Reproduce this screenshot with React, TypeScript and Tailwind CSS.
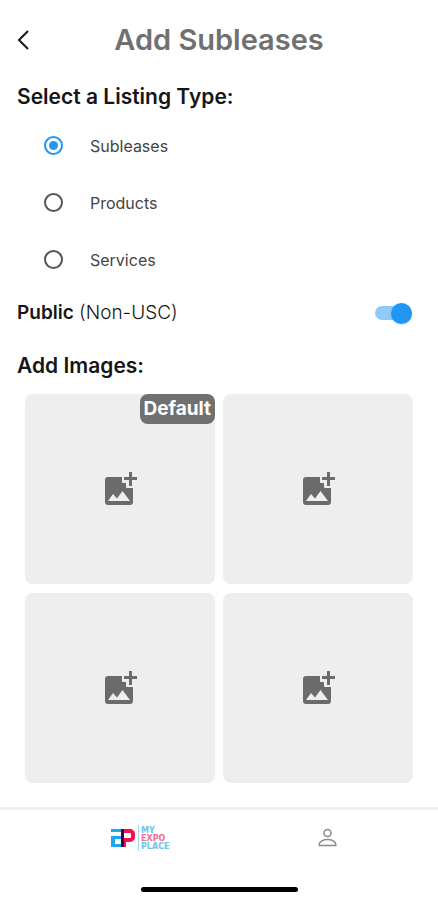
import { useState } from 'react';

const LISTING_TYPES = ['Subleases', 'Products', 'Services'];
const IMAGE_SLOTS = [0, 1, 2, 3];

function AddImageIcon() {
  return (
    <svg viewBox="0 0 34 34" className="h-[34px] w-[34px] fill-[#6b6b6b]" aria-hidden="true">
      <path d="M5 5h14v5a1 1 0 0 0 1 1h3v4a1 1 0 0 0 1 1h6v14a3 3 0 0 1-3 3H5a3 3 0 0 1-3-3V8a3 3 0 0 1 3-3Z" />
      <path d="M26 0h3v5h5v3h-5v6h-3V8h-5V5h5Z" />
      <path d="M5 29 10 22l4 4.500L19.500 19 27 29Z" className="fill-[#eeeeee]" />
    </svg>
  );
}

function Logo() {
  return (
    <svg viewBox="0 0 66 28" className="h-7 w-[66px]" role="img" aria-label="My Expo Place">
      <g fill="#1ea7ee">
        <rect x="1" y="5" width="11" height="3" />
        <rect x="1" y="12" width="11" height="3" />
        <rect x="1" y="20" width="13" height="3" />
        <rect x="1" y="12" width="4" height="11" />
      </g>
      <path d="M11 7h9a3 3 0 0 1 3 3v3a3 3 0 0 1-3 3h-6v7" fill="none" stroke="#f50f50" strokeWidth="4" />
      <rect x="11" y="5" width="3" height="18" fill="#25104a" />
      <rect x="28" y="1" width="1" height="26" fill="#a9d3ea" />
      <g fontFamily="DejaVu Sans, sans-serif" fontWeight="700" fontSize="8">
        <text x="31" y="9" fill="#6cc4ee">MY</text>
        <text x="31" y="17" fill="#f26d92">EXPO</text>
        <text x="31" y="25" fill="#6cc4ee">PLACE</text>
      </g>
    </svg>
  );
}

export default function App() {
  const [listingType, setListingType] = useState('Subleases');
  const [isPublic, setIsPublic] = useState(true);

  return (
    <div className="flex min-h-screen flex-col bg-white font-['Inter',sans-serif] text-[#161616]">
      <header className="grid grid-cols-[48px_1fr_48px] items-center pt-5">
        <button type="button" aria-label="Back" className="flex h-10 items-center pl-4">
          <svg viewBox="0 0 14 20" className="h-5 w-3.5" fill="none" stroke="currentColor" strokeWidth="2">
            <path d="M12 1 3 10l9 9" />
          </svg>
        </button>
        <h1 className="text-center text-[29px] leading-10 font-semibold text-[#707070]">Add Subleases</h1>
      </header>

      <main className="flex-1">
        <fieldset>
          <legend className="px-[17px] pt-[23px] text-[21px] leading-7 font-semibold">Select a Listing Type:</legend>
          <div className="mt-1.5">
            {LISTING_TYPES.map((type) => (
              <label key={type} className="flex h-[57px] items-center gap-[27px] pl-11 text-[16px] text-[#444444]">
                <input
                  type="radio"
                  name="listing-type"
                  value={type}
                  checked={listingType === type}
                  onChange={() => setListingType(type)}
                  className="grid h-[19px] w-[19px] appearance-none place-items-center rounded-full border-2 border-[#555555] before:h-[9px] before:w-[9px] before:rounded-full checked:border-[#2196f3] checked:before:bg-[#2196f3]"
                />
                {type}
              </label>
            ))}
          </div>
        </fieldset>

        <label className="mt-[11px] flex items-center justify-between pr-[26px] pl-[17px] text-[19px] leading-7">
          <span>
            <b className="font-semibold">Public</b> <span className="font-light">(Non-USC)</span>
          </span>
          <input
            type="checkbox"
            role="switch"
            checked={isPublic}
            onChange={(e) => setIsPublic(e.target.checked)}
            className="flex h-3.5 w-[37px] appearance-none items-center rounded-full bg-gray-300 before:h-[21px] before:w-[21px] before:shrink-0 before:rounded-full before:bg-gray-50 before:shadow checked:justify-end checked:bg-[#90caf9] checked:before:bg-[#2196f3]"
          />
        </label>

        <h2 className="mt-[25px] px-[17px] text-[21px] leading-7 font-semibold">Add Images:</h2>
        <div className="mt-3.5 grid grid-cols-2 gap-x-2 gap-y-[9px] px-[25px]">
          {IMAGE_SLOTS.map((slot) => (
            <button
              key={slot}
              type="button"
              aria-label={`Add image ${slot + 1}`}
              className="relative flex aspect-square items-center justify-center rounded-lg bg-[#eeeeee]"
            >
              <AddImageIcon />
              {slot === 0 && (
                <span className="absolute top-0 right-0 rounded-lg bg-[#707070] px-1 text-[19px] leading-[30px] font-bold text-white">
                  Default
                </span>
              )}
            </button>
          ))}
        </div>
      </main>

      <footer className="mt-6 border-t-3 border-[#f0f0f0]">
        <nav className="grid grid-cols-[286px_1fr] items-center pt-3.5">
          <a href="#home" className="flex justify-center">
            <Logo />
          </a>
          <a href="#profile" aria-label="Profile" className="flex pl-8">
            <svg viewBox="0 0 20 20" className="h-5 w-5" fill="none" stroke="#8a8a8a" strokeWidth="1.500">
              <circle cx="9.500" cy="5" r="3.500" />
              <path d="M1.300 17.500v-1.500c0-2.500 4-4.500 8.200-4.500s8.200 2 8.200 4.500v1.500Z" />
            </svg>
          </a>
        </nav>
        <div className="mx-auto mt-[35px] mb-2 h-[5px] w-[157px] rounded-full bg-black" />
      </footer>
    </div>
  );
}
